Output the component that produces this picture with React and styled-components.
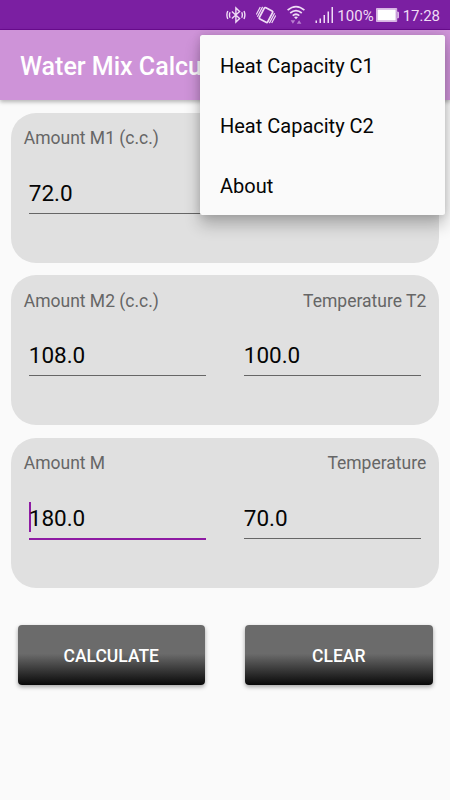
import React from 'react'
import styled, { createGlobalStyle } from 'styled-components'

const colors = {
  primary: '#ce93d8',
  primaryDark: '#7b1fa2',
  accent: '#8e1ba3',
  background: '#fafafa',
  card: '#e0e0e0',
  status: '#efdcf5',
}

// styled----------------------------------

const GlobalStyle = createGlobalStyle`
  body {
    margin: 0;
    background: ${colors.background};
    font-family: Roboto, sans-serif;
  }
`

const Screen = styled.div`
  position: relative;
  display: flex;
  flex-direction: column;
  width: 450px;
  height: 800px;
  overflow: hidden;
  background: ${colors.background};
`

const StatusBar = styled.div`
  display: flex;
  align-items: center;
  justify-content: flex-end;
  box-sizing: border-box;
  height: 30px;
  padding-right: 10px;
  background: ${colors.primaryDark};
  border-bottom: 1px solid #6b0c90;
  color: ${colors.status};
  font-size: 15px;
  line-height: 30px;

  svg {
    display: block;
    flex: none;
  }
`

const Percent = styled.span`
  margin: 2px 2px 0 3px;
`

const Clock = styled.span`
  margin: 2px 0 0 4px;
`

const IconSlot = styled.span`
  margin-right: ${p => p.$gap}px;
`

const AppBar = styled.header`
  display: flex;
  align-items: center;
  flex: none;
  height: 70px;
  padding-left: 20px;
  background: ${colors.primary};
  box-shadow: 0 2px 4px rgba(0, 0, 0, 0.28);
  z-index: 1;
`

const Title = styled.h1`
  margin: 2px 0 0;
  color: white;
  font-size: 25px;
  font-weight: 500;
  white-space: nowrap;
`

const Content = styled.main`
  display: flex;
  flex-direction: column;
  gap: 12.5px;
  padding: 12.5px 11.25px 0;
`

const Card = styled.section`
  box-sizing: border-box;
  height: 150px;
  padding-top: 12.5px;
  border-radius: 25px;
  background: ${colors.card};
`

const Labels = styled.div`
  display: flex;
  justify-content: space-between;
  padding: 0 12.5px;
  color: #666;
  font-size: 17.5px;
  line-height: 26px;
`

const Fields = styled.div`
  display: grid;
  grid-template-columns: 1fr 1fr;
  gap: 37.5px;
  padding: 22.5px 17.5px 0;
`

const Field = styled.div`
  display: flex;
  align-items: flex-start;
  box-sizing: border-box;
  height: ${p => (p.$focused ? 41.5 : 40)}px;
  padding-top: 3px;
  border-bottom: ${p => (p.$focused ? `2.5px solid ${colors.accent}` : '1px solid #666')};
  color: #050505;
  font-size: 22.5px;
  line-height: 33px;
`

const Caret = styled.span`
  width: 2px;
  height: 30px;
  margin-right: -2px;
  background: ${colors.accent};
`

const Actions = styled.div`
  display: flex;
  justify-content: space-between;
  padding: 25px 6.25px 0;
`

const Button = styled.button`
  width: 187.5px;
  height: 60px;
  padding: 2px 0 0;
  border: 0;
  border-radius: 4px;
  background: linear-gradient(#6b6b6b 0%, #6b6b6b 48%, #141414 94%, #080808 100%);
  box-shadow: 0 2px 4px rgba(0, 0, 0, 0.35);
  color: white;
  font-family: inherit;
  font-size: 17.5px;
  font-weight: 500;
`

const Menu = styled.ul`
  position: absolute;
  top: 35px;
  right: 5px;
  z-index: 2;
  width: 245px;
  margin: 0;
  padding: 0;
  border-radius: 2.5px;
  background: ${colors.background};
  box-shadow: 0 10px 16px rgba(0, 0, 0, 0.24), 0 0 9px rgba(0, 0, 0, 0.14);
  list-style: none;
`

const MenuItem = styled.li`
  height: 60px;
  padding-left: 20px;
  color: #050505;
  font-size: 20px;
  line-height: 62px;
`

// icons-----------------------------------

const BluetoothIcon = () => (
  <svg width='20' height='18' viewBox='0 0 20 18' fill='none' stroke={colors.status} strokeWidth='1.4'>
    <path d='M5.9 5.4l7.7 7.1-3.7 3.6V1.9l3.7 3.6-7.7 7.1' />
    <path d='M4.1 6.2q-1.3 2.8 0 5.6M1.8 5q-1.8 4 0 8M15.7 6.2q1.3 2.8 0 5.6M18 5q1.8 4 0 8' />
  </svg>
)

const VibrateIcon = () => (
  <svg width='20' height='20' viewBox='0 0 20 20' fill='none' stroke={colors.status}>
    <g transform='rotate(28 10 10)'>
      <rect x='5.3' y='3.6' width='9.4' height='12.8' rx='1.2' strokeWidth='1.8' />
      <path d='M3.2 4.4v11.2M1.2 5.6v8.6M16.8 4.4v11.2M18.8 5.8v8.6' strokeWidth='1.2' />
    </g>
  </svg>
)

const WifiIcon = () => (
  <svg width='20' height='19' viewBox='0 0 20 19'>
    <g fill='none' stroke={colors.status} strokeWidth='1.7'>
      <path d='M1.6 5.2q8.4-7.2 16.8 0' />
      <path d='M4.2 8q5.8-4.8 11.6 0' />
      <path d='M6.7 10.6q3.3-2.7 6.6 0' />
    </g>
    <path d='M8 12q2-1.2 4 0l-2 2.2z' fill={colors.status} />
    <path d='M4.6 15.2h4.6l-2.3 3.5zM10.8 18.7h4.6l-2.3-3.5z' fill='#b97fd0' />
  </svg>
)

const SignalIcon = () => (
  <svg width='19' height='16' viewBox='0 0 19 16' fill={colors.status}>
    <path d='M.5 13.5H2V16H.5zM4.5 11.5H6V16H4.5zM8.5 8H10v8H8.5zM12.5 4.5H14V16h-1.5zM16.5 0H18v16h-1.5z' />
  </svg>
)

const BatteryIcon = () => (
  <svg width='23' height='14' viewBox='0 0 23 14'>
    <path d='M.5.5h20.2v3.7h1.8v5.6h-1.8v3.7H.5z' fill='#c79bd8' stroke='#d9b5e5' />
    <path d='M1.6 1.6h18v10.8h-18z' fill='white' />
  </svg>
)

// components------------------------------

const Mix = ({ amountLabel, tempLabel, amount, temp, focused }) => (
  <Card>
    <Labels>
      <span>{amountLabel}</span>
      <span>{tempLabel}</span>
    </Labels>
    <Fields>
      <Field $focused={focused}>
        {focused && <Caret />}
        {amount}
      </Field>
      {temp && <Field>{temp}</Field>}
    </Fields>
  </Card>
)

const App = () => (
  <Screen>
    <GlobalStyle />
    <StatusBar>
      <IconSlot $gap={10}><BluetoothIcon /></IconSlot>
      <IconSlot $gap={10}><VibrateIcon /></IconSlot>
      <IconSlot $gap={9}><WifiIcon /></IconSlot>
      <SignalIcon />
      <Percent>100%</Percent>
      <BatteryIcon />
      <Clock>17:28</Clock>
    </StatusBar>
    <AppBar>
      <Title>Water Mix Calcu</Title>
    </AppBar>
    <Content>
      <Mix amountLabel='Amount M1 (c.c.)' amount='72.0' />
      <Mix amountLabel='Amount M2 (c.c.)' tempLabel='Temperature T2' amount='108.0' temp='100.0' />
      <Mix amountLabel='Amount M' tempLabel='Temperature' amount='180.0' temp='70.0' focused />
      <Actions>
        <Button>CALCULATE</Button>
        <Button>CLEAR</Button>
      </Actions>
    </Content>
    <Menu>
      <MenuItem>Heat Capacity C1</MenuItem>
      <MenuItem>Heat Capacity C2</MenuItem>
      <MenuItem>About</MenuItem>
    </Menu>
  </Screen>
)

export default App
